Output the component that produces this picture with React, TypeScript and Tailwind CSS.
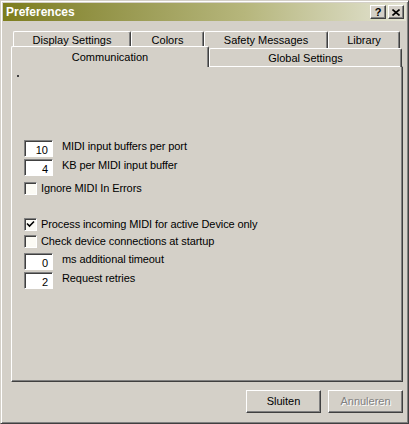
import React from 'react'

const font = { fontFamily: '"Liberation Sans", Arial, sans-serif' }

const raised =
  'border border-t-white border-l-white border-r-[#404040] border-b-[#404040] shadow-[inset_-1px_-1px_#808080]'

function NumBox({ value }: { value: string }) {
  return (
    <div className="w-[29px] h-[17px] bg-white border border-t-[#808080] border-l-[#808080] border-r-white border-b-white shadow-[inset_1px_1px_#404040] flex items-center justify-end pr-[4px] pt-[3px] text-[11px] text-black">
      {value}
    </div>
  )
}

function Check({ checked }: { checked?: boolean }) {
  return (
    <div className="w-[13px] h-[13px] bg-[#fbfaf4] border border-t-[#808080] border-l-[#808080] border-r-white border-b-white shadow-[inset_1px_1px_#404040] flex items-center justify-center">
      {checked && (
        <svg width="9" height="9" viewBox="0 0 9 9">
          <path d="M1 3.5 L3.5 6 L8 1.5" stroke="#000" strokeWidth="1.6" fill="none" />
        </svg>
      )}
    </div>
  )
}

function NumRow({ value, label }: { value: string; label: string }) {
  return (
    <div className="flex items-start gap-[9px] h-[17px]">
      <NumBox value={value} />
      <span className="text-[11px] leading-[13px] tracking-[-0.1px]">{label}</span>
    </div>
  )
}

function CheckRow({ label, checked }: { label: string; checked?: boolean }) {
  return (
    <div className="flex items-center gap-[4px] h-[13px]">
      <Check checked={checked} />
      <span className="text-[11px] leading-[13px] tracking-[-0.1px]">{label}</span>
    </div>
  )
}

function BackTab({ label, w }: { label: string; w: string }) {
  return (
    <div
      className={`${w} h-[17px] border border-b-0 border-t-white border-l-white border-r-[#404040] shadow-[inset_-1px_0_#808080] rounded-t-[2px] flex items-center justify-center text-[11px]`}
    >
      {label}
    </div>
  )
}

export default function App() {
  return (
    <div
      style={font}
      className="w-[409px] h-[424px] bg-[#d4d0c8] text-black border border-t-[#d4d0c8] border-l-[#d4d0c8] border-r-[#404040] border-b-[#404040] shadow-[inset_1px_1px_white,inset_-1px_-1px_#808080] p-[2px] flex flex-col"
    >
      {/* title bar */}
      <div className="h-[18px] bg-gradient-to-r from-[#7d7d1c] via-[#b6b67c] via-60% to-[#e4e4d4] flex items-center pl-[3px] pr-[2px]">
        <span className="text-white font-bold text-[12px] leading-none flex-1">Preferences</span>
        <div className="flex gap-[2px]">
          <div className={`w-[16px] h-[14px] bg-[#d4d0c8] ${raised} flex items-center justify-center text-[11px] font-bold leading-none`}>
            ?
          </div>
          <div className={`w-[16px] h-[14px] bg-[#d4d0c8] ${raised} flex items-center justify-center`}>
            <svg width="8" height="7" viewBox="0 0 8 7">
              <path d="M0.5 0.5 L7.5 6.5 M7.5 0.5 L0.5 6.5" stroke="#000" strokeWidth="1.6" />
            </svg>
          </div>
        </div>
      </div>

      {/* tabs */}
      <div className="mt-[10px] ml-[10px] flex">
        <BackTab label="Display Settings" w="w-[118px]" />
        <BackTab label="Colors" w="w-[73px]" />
        <BackTab label="Safety Messages" w="w-[124px]" />
        <BackTab label="Library" w="w-[72px]" />
      </div>
      <div className="ml-[8px] flex items-end -mt-[2px] relative z-10">
        <div className="w-[198px] h-[21px] border border-b-0 border-t-white border-l-white border-r-[#404040] shadow-[inset_-1px_0_#808080] rounded-t-[2px] bg-[#d4d0c8] flex items-start justify-center pt-[2px] text-[11px]">
          Communication
        </div>
        <div className="w-[193px] h-[19px] border border-b-0 border-t-white border-l-white border-r-[#404040] shadow-[inset_-1px_0_#808080] rounded-t-[2px] flex items-center justify-center text-[11px] pt-[1px]">
          Global Settings
        </div>
      </div>

      {/* page */}
      <div className="ml-[8px] w-[392px] h-[316px] -mt-[1px] border border-t-white border-l-white border-r-[#404040] border-b-[#404040] shadow-[inset_-1px_-1px_#808080] relative">
        <div className="absolute left-[5px] top-[8px] w-[2px] h-[2px] bg-[#404040]" />
        <div className="pl-[12px] pt-[73px] flex flex-col">
          <div className="flex flex-col gap-[2px]">
            <NumRow value="10" label="MIDI input buffers per port" />
            <NumRow value="4" label="KB per MIDI input buffer" />
          </div>
          <div className="mt-[6px]">
            <CheckRow label="Ignore MIDI In Errors" />
          </div>
          <div className="mt-[23px] flex flex-col gap-[4px]">
            <CheckRow label="Process incoming MIDI for active Device only" checked />
            <CheckRow label="Check device connections at startup" />
          </div>
          <div className="mt-[5px] flex flex-col gap-[2px]">
            <NumRow value="0" label="ms additional timeout" />
            <NumRow value="2" label="Request retries" />
          </div>
        </div>
      </div>

      {/* buttons */}
      <div className="flex justify-end gap-[7px] mt-[8px] pr-[3px]">
        <div className={`w-[75px] h-[23px] ${raised} flex items-center justify-center text-[11px]`}>Sluiten</div>
        <div className={`w-[75px] h-[23px] ${raised} flex items-center justify-center text-[11px] text-[#808080] [text-shadow:1px_1px_white]`}>
          Annuleren
        </div>
      </div>
    </div>
  )
}
